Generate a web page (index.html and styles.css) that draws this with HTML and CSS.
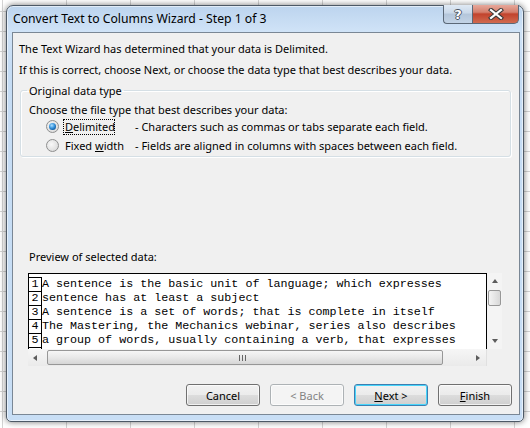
FILE: index.html
```html
<!DOCTYPE html>
<html lang="en">
<head>
  <meta charset="UTF-8" />
  <title>Convert Text to Columns Wizard - Step 1 of 3</title>
  <link rel="stylesheet" href="styles.css">
</head>
<body>

  <div class="desktop">
    <div class="window">
      <div class="titlebar">
        <span class="title">Convert Text to Columns Wizard - Step 1 of 3</span>
        <div class="caption-btns">
          <span class="cap help">?</span>
          <span class="cap close">
            <svg width="16" height="12" viewBox="0 0 16 12">
              <path d="M3 2 L13 10 M13 2 L3 10" stroke="#3a3a3a" stroke-width="4.2" stroke-linecap="square"/>
              <path d="M3 2 L13 10 M13 2 L3 10" stroke="#fff" stroke-width="2.2" stroke-linecap="square"/>
            </svg>
          </span>
        </div>
      </div>

      <div class="client">
        <p class="msg">The Text Wizard has determined that your data is Delimited.</p>
        <p class="msg">If this is correct, choose Next, or choose the data type that best describes your data.</p>

        <fieldset class="group">
          <legend>Original data type</legend>
          <p class="group-hint">Choose the file type that best describes your data:</p>
          <div class="option">
            <span class="radio checked"></span>
            <span class="opt-name focused"><u>D</u>elimited</span>
            <span class="opt-desc">- Characters such as commas or tabs separate each field.</span>
          </div>
          <div class="option">
            <span class="radio"></span>
            <span class="opt-name">Fixed <u>w</u>idth</span>
            <span class="opt-desc">- Fields are aligned in columns with spaces between each field.</span>
          </div>
        </fieldset>

        <p class="preview-label">Preview of selected data:</p>
        <div class="preview">
          <div class="rows">
            <div class="row"><span class="num">1</span><span class="line">A sentence is the basic unit of language; which expresses</span></div>
            <div class="row"><span class="num">2</span><span class="line">sentence has at least a subject</span></div>
            <div class="row"><span class="num">3</span><span class="line">A sentence is a set of words; that is complete in itself</span></div>
            <div class="row"><span class="num">4</span><span class="line">The Mastering, the Mechanics webinar, series also describes</span></div>
            <div class="row"><span class="num">5</span><span class="line">a group of words, usually containing a verb, that expresses</span></div>
            <div class="row"><span class="num"></span><span class="line"></span></div>
          </div>
          <div class="vscroll">
            <span class="arrow up"></span>
            <span class="vthumb"></span>
            <span class="arrow down"></span>
          </div>
          <div class="hscroll">
            <span class="arrow left"></span>
            <span class="hthumb"><span class="grip"></span></span>
            <span class="arrow right"></span>
          </div>
          <div class="corner"></div>
        </div>

        <div class="buttons">
          <button class="btn">Cancel</button>
          <button class="btn" disabled>&lt; Back</button>
          <button class="btn default"><u>N</u>ext &gt;</button>
          <button class="btn"><u>F</u>inish</button>
        </div>
      </div>
    </div>
  </div>

</body>
</html>
```

FILE: styles.css
```css
body {
  margin: 0;
  font-family: "Segoe UI", "Noto Sans", sans-serif;
  font-size: 11px;
  color: #000;
}
.desktop {
  width: 530px;
  height: 428px;
  overflow: hidden;
  box-sizing: border-box;
  padding: 5px 0 0 6px;
  background-color: #fff;
  background-image:
    linear-gradient(to right, #d4d4d4 1px, transparent 1px),
    linear-gradient(to bottom, #d4d4d4 1px, transparent 1px);
  background-size: 64px 20px;
  background-position: 2px 11px;
}
.window {
  width: 518px;
  height: 417px;
  box-sizing: border-box;
  border: 1px solid #4d5966;
  border-radius: 7px 7px 5px 5px;
  background: linear-gradient(to bottom, #bcd4ee 0, #d0e3f7 26px, #c5dcf4 60px, #c8def5 100%);
  box-shadow: 0 0 6px rgba(0, 0, 0, 0.55), inset 0 0 0 1px rgba(255, 255, 255, 0.55);
}
.titlebar {
  height: 26px;
  display: flex;
  align-items: flex-start;
}
.title {
  padding: 5px 0 0 6px;
  font-size: 12.2px;
  line-height: 16px;
  color: #000;
}
.caption-btns {
  margin: -1px 4px 0 auto;
  display: flex;
}
.cap {
  height: 19px;
  box-sizing: border-box;
  border: 1px solid #5b6877;
  border-top: none;
  display: flex;
  align-items: center;
  justify-content: center;
}
.help {
  width: 29px;
  border-radius: 0 0 0 4px;
  border-right: none;
  background: linear-gradient(to bottom, #dfe9f4 0, #c9d8e9 45%, #b4c6da 50%, #c2d3e6 100%);
  color: #fff;
  font-family: "DejaVu Sans", sans-serif;
  font-weight: bold;
  font-size: 13px;
  text-shadow: 1px 0 #4b5562, -1px 0 #4b5562, 0 1px #4b5562, 0 -1px #4b5562;
}
.close {
  width: 47px;
  border-radius: 0 0 5px 0;
  background: linear-gradient(to bottom, #e7a89b 0, #d47f6d 40%, #c2432d 50%, #d06a4f 100%);
}
.client {
  margin-left: 5px;
  width: 508px;
  height: 383px;
  box-sizing: border-box;
  border: 1px solid #7a8795;
  background: #f0f0f0;
  padding: 8px 7px 0 6px;
}
.msg {
  margin: 0 0 6px;
  line-height: 15px;
}
.group {
  margin: 5px 1px 0 1px;
  padding: 4px 8px 1px 8px;
  border: 1px solid #d5dfe5;
  border-radius: 3px;
  box-shadow: inset 1px 1px #fff, 1px 1px #fff;
}
.group legend {
  padding: 0 2px;
  margin-left: -2px;
  line-height: 15px;
}
.group-hint {
  margin: 0;
  line-height: 15px;
}
.option {
  height: 19px;
  display: flex;
  align-items: center;
}
.radio {
  width: 13px;
  height: 13px;
  box-sizing: border-box;
  margin: 0 4px 0 17px;
  border: 1px solid #8e8f8f;
  border-radius: 50%;
  background: radial-gradient(circle at 40% 40%, #f8f8f8 0, #e2e2e2 60%, #cfcfcf 100%);
  display: flex;
  align-items: center;
  justify-content: center;
}
.radio.checked::after {
  content: "";
  width: 7px;
  height: 7px;
  border-radius: 50%;
  background: radial-gradient(circle at 40% 35%, #aee0ff 0, #3f9ae0 40%, #0b5aa2 75%, #073f74 100%);
}
.opt-name {
  width: 68px;
  padding: 0 1px;
  line-height: 14px;
  box-sizing: border-box;
  border: 1px solid transparent;
}
.opt-name.focused {
  width: 52px;
  margin-right: 16px;
  border: 1px dotted #000;
}
.opt-desc {
  margin-left: 4px;
}
.preview-label {
  margin: 92px 0 0 10px;
  line-height: 15px;
}
.preview {
  margin: 9px 0 0 9px;
  display: grid;
  grid-template-columns: 459px 15px;
  grid-template-rows: 76px 17px;
}
.rows {
  border: 1px solid #000;
  border-bottom: none;
  background: #fff;
  overflow: hidden;
  padding-top: 3px;
}
.row {
  height: 14px;
  display: flex;
  font-family: "Liberation Mono", "Courier New", monospace;
  font-size: 11.7px;
  line-height: 14px;
  white-space: pre;
}
.num {
  width: 13px;
  flex: none;
  box-sizing: border-box;
  border-top: 1px solid #000;
  border-right: 1px solid #000;
  text-align: center;
  line-height: 13px;
}
.vscroll {
  background: #f4f4f4;
  display: flex;
  flex-direction: column;
  align-items: center;
  padding-top: 6px;
  box-sizing: border-box;
}
.vthumb {
  width: 13px;
  height: 16px;
  margin-top: 7px;
  box-sizing: border-box;
  border: 1px solid #979797;
  border-radius: 2px;
  background: linear-gradient(to right, #f4f4f4, #e6e6e6 50%, #d8d8d8);
}
.arrow {
  width: 0;
  height: 0;
  border: 3.5px solid transparent;
}
.arrow.up {
  border-bottom: 4px solid #5c5c5c;
  border-top: none;
}
.arrow.down {
  margin-top: auto;
  margin-bottom: 6px;
  border-top: 4px solid #5c5c5c;
  border-bottom: none;
}
.hscroll {
  background: linear-gradient(to bottom, #f6f6f6, #eaeaea);
  display: flex;
  align-items: center;
  padding: 0 6px 0 5px;
  border-right: 1px solid #e0e0e0;
}
.arrow.left {
  border-right: 4px solid #5c5c5c;
  border-left: none;
}
.arrow.right {
  margin-left: auto;
  border-left: 4px solid #5c5c5c;
  border-right: none;
}
.hthumb {
  margin-left: 10px;
  width: 396px;
  height: 15px;
  box-sizing: border-box;
  border: 1px solid #979797;
  border-radius: 2px;
  background: linear-gradient(to bottom, #f6f6f6, #e8e8e8 50%, #d6d6d6);
  display: flex;
  justify-content: flex-end;
  align-items: center;
  padding-right: 196px;
}
.grip {
  width: 7px;
  height: 6px;
  background: repeating-linear-gradient(to right, #666 0, #666 1px, transparent 1px, transparent 3px);
}
.corner {
  background: #f0f0f0;
}
.buttons {
  margin-top: 18px;
  display: flex;
  justify-content: flex-end;
  gap: 10px;
}
.btn {
  width: 74px;
  height: 22px;
  padding: 0;
  font-family: inherit;
  font-size: 11px;
  color: #000;
  border: 1px solid #707070;
  border-radius: 3px;
  background: linear-gradient(to bottom, #f2f2f2 0, #ebebeb 50%, #dddddd 50%, #cfcfcf 100%);
  box-shadow: inset 0 0 0 1px rgba(255, 255, 255, 0.7);
}
.btn:disabled {
  color: #838383;
  border-color: #adb2b5;
  background: #f4f4f4;
}
.btn.default {
  border-color: #3c7fb1;
  box-shadow: inset 0 0 0 1px #48d5fb;
}
```
